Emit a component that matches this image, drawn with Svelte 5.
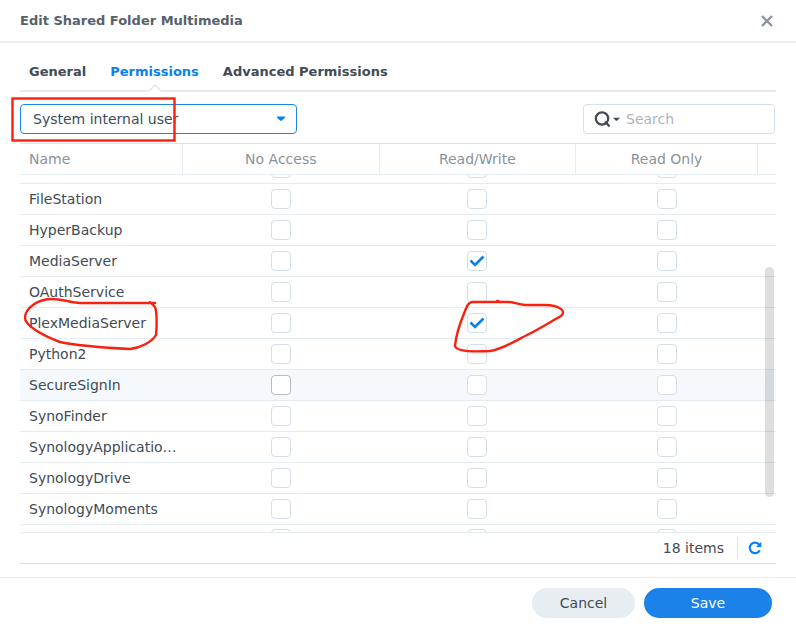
<script lang="ts">
type Row = { name: string; access: string; hover?: boolean; cut?: string };

let rows: Row[] = $state([
{ name: "", access: "", cut: "top" },
{ name: "FileStation", access: "" },
{ name: "HyperBackup", access: "" },
{ name: "MediaServer", access: "rw" },
{ name: "OAuthService", access: "" },
{ name: "PlexMediaServer", access: "rw" },
{ name: "Python2", access: "" },
{ name: "SecureSignIn", access: "", hover: true },
{ name: "SynoFinder", access: "" },
{ name: "SynologyApplicationService", access: "" },
{ name: "SynologyDrive", access: "" },
{ name: "SynologyMoments", access: "" },
{ name: "", access: "", cut: "bottom" },
]);

const columns = [
{ id: "na", label: "No Access" },
{ id: "rw", label: "Read/Write" },
{ id: "ro", label: "Read Only" },
];

const tabs = ["General", "Permissions", "Advanced Permissions"];
let currentTab = $state("Permissions");

function setAccess(row: Row, id: string) {
row.access = row.access === id ? "" : id;
}
</script>

<div class="dialog">
<header class="title-bar">
<h1>Edit Shared Folder Multimedia</h1>
<button class="close" aria-label="Close">
<svg width="12" height="12" viewBox="0 0 12 12"><path d="M1 1L11 11M11 1L1 11" /></svg>
</button>
</header>

<main class="content">
<nav class="tabs">
{#each tabs as tab}
<button class="tab" class:active={currentTab === tab} onclick={() => (currentTab = tab)}>
{tab}
{#if currentTab === tab}
<svg class="notch" width="14" height="8" viewBox="0 0 14 8"><path d="M0.5 7.5L7 1L13.5 7.5" /></svg>
{/if}
</button>
{/each}
</nav>

<div class="toolbar">
<div class="select-box">
<select aria-label="User type">
<option>System internal user</option>
</select>
<svg class="arrow" width="10" height="6" viewBox="0 0 10 6"><path d="M1 0.5H9Q9.6 0.8 9 1.4L6 4.4Q5 5.2 4 4.4L1 1.4Q0.4 0.8 1 0.5Z" /></svg>
</div>
<label class="search">
<svg width="27" height="18" viewBox="0 0 27 18">
<circle cx="8" cy="8.5" r="6.2" />
<path class="handle" d="M11 11.5L15.6 16.4" />
<path class="caret" d="M19 7.8H26L23.3 10.4Q22.5 11 21.7 10.4Z" />
</svg>
<input type="text" placeholder="Search" aria-label="Search" />
</label>
</div>

<table>
<colgroup>
<col class="col-name" />
<col class="col-access" />
<col class="col-access" />
<col />
<col class="col-end" />
</colgroup>
<thead>
<tr>
<th class="name">Name</th>
{#each columns as col}
<th>{col.label}</th>
{/each}
<th></th>
</tr>
</thead>
<tbody>
{#each rows as row}
<tr class={row.cut ? `cut ${row.cut}` : ""} class:hover={row.hover}>
<td class="name">{row.name}</td>
{#each columns as col}
<td>
<div class="cell">
<input
type="checkbox"
aria-label={`${row.name} ${col.label}`}
class:focus={row.hover && col.id === "na"}
checked={row.access === col.id}
onchange={() => setAccess(row, col.id)}
/>
{#if row.access === col.id}
<svg class="check" width="16" height="12" viewBox="0 0 16 12"><path d="M1.5 5.5L6 10L14.5 1.5" /></svg>
{/if}
</div>
</td>
{/each}
<td></td>
</tr>
{/each}
</tbody>
</table>

<div class="status">
<span>18 items</span>
<button class="refresh" aria-label="Refresh">
<svg width="14" height="14" viewBox="0 0 14 14">
<path class="ring" d="M11.8 9.2A5.3 5.3 0 1 1 11.2 3.6" />
<path class="tip" d="M13.3 0.8V6H8Z" />
</svg>
</button>
</div>
<div class="scrollbar"></div>
</main>

<footer class="actions">
<button class="btn cancel">Cancel</button>
<button class="btn save">Save</button>
</footer>

<!-- Hand-drawn markings -->
<svg class="marks" width="580" height="360" viewBox="0 0 580 360">
<rect x="12.5" y="98.5" width="162" height="42" />
<path d="M155 303L80 303C66 302 64 299 52 299C38 299 25 308 25 318C25 325 41 335 60 342C75 345 110 348 130 349C140 348 152 342 156 335C157 326 157 312 155 307L150 302" />
<path d="M497 301L500 302L472 302C468 303 467 306 465 311C460 323 456 334 455 346C456 351 471 352 490 351C503 349 515 341 529 334C541 328 552 321 561 316C567 311 559 305 545 305L525 305C517 304 514 302 508 302L496 302" />
</svg>
</div>

<style>
:global(body) {
margin: 0;
background: #fff;
}

.dialog {
position: relative;
font-family: Verdana, "DejaVu Sans", sans-serif;
font-size: 14px;
color: #414b55;
background: #fff;
}

button,
input,
select {
font: inherit;
color: inherit;
}

button {
border: 0;
padding: 0;
background: none;
cursor: pointer;
}

svg {
fill: none;
}

.title-bar {
display: flex;
align-items: center;
justify-content: space-between;
height: 41px;
padding: 0 20px;
border-bottom: 2px solid #ebf0f4;
}

h1 {
margin: 0;
font-size: 13px;
color: #57616b;
}

.close {
display: flex;
padding: 3px;
}

.close path {
stroke: #8c949c;
stroke-width: 2.4;
}

.content {
position: relative;
margin: 0 20px;
}

.tabs {
display: flex;
gap: 24px;
height: 47px;
padding: 0 9px;
border-bottom: 2px solid #e4ebf1;
}

.tab {
position: relative;
padding-top: 9px;
font-size: 13px;
font-weight: bold;
}

.tab.active {
color: #0a80f0;
}

.notch {
position: absolute;
left: 50%;
bottom: -2px;
margin-left: -7px;
background: #fff;
}

.notch path {
stroke: #dbe4ec;
stroke-width: 1.3;
}

.toolbar {
display: flex;
justify-content: space-between;
padding: 12px 1px 9px 0;
}

.select-box {
position: relative;
width: 277px;
}

select {
appearance: none;
box-sizing: border-box;
width: 100%;
height: 30px;
padding: 0 12px;
border: 1px solid #1a85ee;
border-radius: 4px;
background: #fff;
}

.arrow {
position: absolute;
right: 11px;
top: 12px;
fill: #0a80f0;
pointer-events: none;
}

.search {
display: flex;
align-items: center;
gap: 5px;
box-sizing: border-box;
width: 192px;
height: 30px;
padding: 0 10px;
border: 1px solid #d6e0e8;
border-radius: 4px;
}

.search svg {
flex: none;
}

.search circle,
.handle {
stroke: #414b55;
stroke-width: 2.2;
}

.caret {
fill: #414b55;
}

.search input {
min-width: 0;
width: 100%;
padding: 0;
border: 0;
outline: 0;
background: none;
}

.search input::placeholder {
color: #adb3b9;
opacity: 1;
}

table {
width: 100%;
table-layout: fixed;
border-collapse: separate;
border-spacing: 0;
}

.col-name {
width: 163px;
}

.col-access {
width: 26%;
}

.col-end {
width: 18px;
}

th,
td {
box-sizing: border-box;
height: 31px;
padding: 0 1px 0 0;
border-bottom: 1px solid #e4ebf1;
}

th {
height: 32px;
padding: 0;
border-top: 1px solid #dbe4ec;
border-right: 1px solid #e4ebf1;
color: #8c9298;
font-weight: normal;
}

th:last-child {
border-right: 0;
}

.name {
padding: 0 2px 0 9px;
text-align: left;
white-space: nowrap;
overflow: hidden;
text-overflow: ellipsis;
}

.hover td {
background: #f5f9fe;
}

.cell {
position: relative;
display: flex;
align-items: center;
justify-content: center;
height: 30px;
}

input[type="checkbox"] {
appearance: none;
flex: none;
box-sizing: border-box;
width: 20px;
height: 20px;
margin: 0;
border: 1px solid #d3dee8;
border-radius: 4px;
background: #fff;
}

input[type="checkbox"].focus {
border-color: #b4bcc3;
}

.check {
position: absolute;
pointer-events: none;
}

.check path {
stroke: #0a80f0;
stroke-width: 2.6;
}

/* rows at the edges of the scrolled list */
.cut td {
height: 9px;
}

.cut .cell {
overflow: hidden;
}

.top .cell {
align-items: flex-end;
padding-bottom: 5px;
height: 3px;
}

.bottom td {
height: 8px;
}

.bottom .cell {
align-items: flex-start;
padding-top: 4px;
height: 3px;
}

.scrollbar {
position: absolute;
top: 224px;
right: 2px;
width: 9px;
height: 230px;
border-radius: 5px;
background: rgba(0, 0, 0, 0.13);
}

.status {
display: flex;
align-items: center;
justify-content: flex-end;
height: 30px;
border-bottom: 1px solid #d6e0e8;
}

.refresh {
display: flex;
margin-left: 13px;
padding: 4px 14px 4px 10px;
border-left: 1px solid #dbe4ec;
}

.ring {
stroke: #0a80f0;
stroke-width: 2.2;
}

.tip {
fill: #0a80f0;
}

.actions {
display: flex;
justify-content: flex-end;
gap: 9px;
margin-top: 13px;
padding: 10px 24px;
border-top: 1px solid #e4ebf1;
}

.btn {
width: 103px;
height: 30px;
border-radius: 15px;
}

.cancel {
background: #e8edf2;
}

.save {
width: 128px;
background: #1a82e8;
color: #fff;
}

.marks {
position: absolute;
top: 0;
left: 0;
pointer-events: none;
stroke: #f9200f;
stroke-width: 2.4;
stroke-linecap: round;
stroke-linejoin: round;
}

.marks rect {
stroke-linejoin: miter;
}
</style>
